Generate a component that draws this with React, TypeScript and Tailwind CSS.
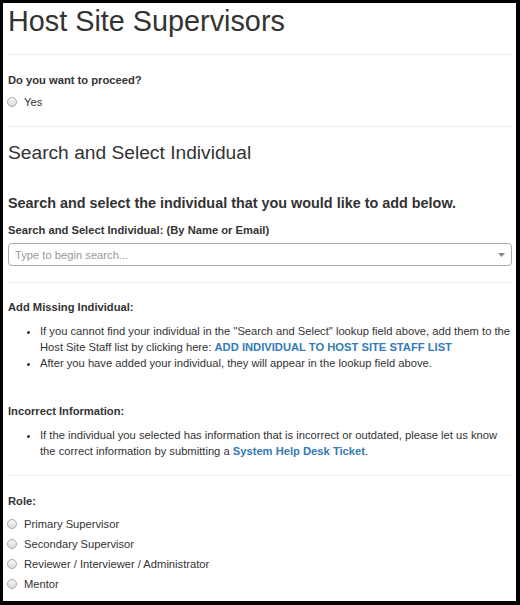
import React from "react";

function Radio({ label }: { label: string }) {
  return (
    <div className="flex items-center h-[16px] leading-[16px]">
      <span className="ml-[-1px] w-[10px] h-[10px] rounded-full border border-[#a9a9a9] bg-gradient-to-b from-[#f6f6f6] to-[#dadada] shrink-0" />
      <span className="ml-[7px]">{label}</span>
    </div>
  );
}

export default function App() {
  return (
    <div
      className="w-[520px] h-[605px] box-border border-l-[3px] border-t-[3px] border-r-[4px] border-b-[4px] border-black bg-white text-[#333333] text-[11.2px] leading-[16px] overflow-hidden"
      style={{ fontFamily: '"Liberation Sans", Arial, sans-serif' }}
    >
      <div className="pl-[5px] pr-[4px]">
        <h1 className="mt-[2px] text-[28.8px] leading-[32px] font-normal">Host Site Supervisors</h1>
        <div className="mt-[17px] h-px bg-[#eeeeee]" />

        <div className="mt-[17px] font-bold">Do you want to proceed?</div>
        <div className="mt-[6px]">
          <Radio label="Yes" />
        </div>
        <div className="mt-[16px] h-px bg-[#eeeeee]" />

        <h3 className="mt-[15px] text-[19.2px] leading-[21px] font-normal">Search and Select Individual</h3>
        <h4 className="mt-[32px] text-[14.4px] leading-[16px] font-bold">
          Search and select the individual that you would like to add below.
        </h4>
        <div className="mt-[11px] font-bold">Search and Select Individual: (By Name or Email)</div>
        <div className="mt-[5px] h-[23px] border border-[#aaaaaa] rounded-[4px] flex items-center justify-between pl-[6px] pr-[6px]">
          <span className="text-[#999999]">Type to begin search...</span>
          <svg width="7" height="4" viewBox="0 0 7 4">
            <path d="M0 0 L7 0 L3.5 4 Z" fill="#888888" />
          </svg>
        </div>
        <div className="mt-[16px] h-px bg-[#eeeeee]" />

        <div className="mt-[16px] font-bold">Add Missing Individual:</div>
        <ul className="mt-[8px] list-disc pl-[32px] whitespace-nowrap">
          <li>
            If you cannot find your individual in the "Search and Select" lookup field above, add them to the
            <br />
            Host Site Staff list by clicking here:{" "}
            <a className="text-[#337ab7] font-bold">ADD INDIVIDUAL TO HOST SITE STAFF LIST</a>
          </li>
          <li>After you have added your individual, they will appear in the lookup field above.</li>
        </ul>

        <div className="mt-[32px] font-bold">Incorrect Information:</div>
        <ul className="mt-[8px] list-disc pl-[32px] whitespace-nowrap">
          <li>
            If the individual you selected has information that is incorrect or outdated, please let us know
            <br />
            the correct information by submitting a{" "}
            <a className="text-[#337ab7] font-bold">System Help Desk Ticket</a>.
          </li>
        </ul>
        <div className="mt-[16px] h-px bg-[#eeeeee]" />

        <div className="mt-[17px] font-bold">Role:</div>
        <div className="mt-[7px] flex flex-col gap-[4px]">
          <Radio label="Primary Supervisor" />
          <Radio label="Secondary Supervisor" />
          <Radio label="Reviewer / Interviewer / Administrator" />
          <Radio label="Mentor" />
        </div>
      </div>
    </div>
  );
}
